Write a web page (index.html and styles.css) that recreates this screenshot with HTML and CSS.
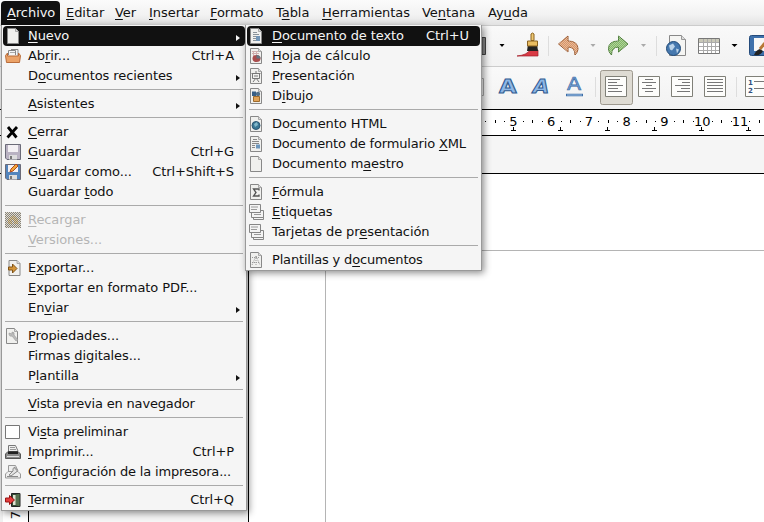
FILE: index.html
```html
<!DOCTYPE html>
<html lang="es">
<head>
<meta charset="utf-8">
<title>Writer</title>
<link rel="stylesheet" href="styles.css">
</head>
<body>
<svg class="defs" width="0" height="0">
  <symbol id="page" viewBox="0 0 16 16"><path d="M2.5.5h8l3 3v12h-11z" fill="#f0f0ee" stroke="#888"/><path d="M10.500 .5v3h3" fill="#ddd" stroke="#999" stroke-width=".8"/></symbol>
  <symbol id="cards" viewBox="0 0 16 16"><g fill="#f3f3f3" stroke="#858585"><path d="M5.500 11.500h10v4h-10z"/><path d="M3.500 6.500h12v7h-12z"/><path d="M1.500 .5h11v8h-11z"/></g><path d="M3 3h7M3 5.500h6M6 10.500h7" stroke="#999"/></symbol>
  <symbol id="floppy" viewBox="0 0 16 16"><path d="M.5.5h15v15H2l-1.500-1.500z" fill="currentColor" stroke="#6b6b78"/><path d="M3 1h10v7H3z" fill="#f4f1f4"/><path d="M4 11h8v4.500H4z" fill="#ddd"/><path d="M5 12h2v3H5z" fill="#777"/></symbol>
</svg>
<nav class="menubar">
  <span class="open"><u>A</u>rchivo</span><span><u>E</u>ditar</span><span><u>V</u>er</span><span><u>I</u>nsertar</span><span><u>F</u>ormato</span><span>T<u>a</u>bla</span><span><u>H</u>erramientas</span><span>Ve<u>n</u>tana</span><span>Ay<u>u</u>da</span>
</nav>
<div class="toolbar standard">
  <svg width="282" height="40">
    <defs><pattern id="dither" width="2" height="2" patternUnits="userSpaceOnUse"><path d="M0 0h1v1H0zM1 1h1v1H1z" fill="#fff" opacity=".35"/></pattern></defs>
    <path d="M0 11.500h3.500v17H0z" fill="#888" stroke="#444"/>
    <path d="M17.500 18h5l-2.500 3z"/>
    <path d="M35 30q10-1 13-6l8 0v6z" fill="#d83a45" stroke="#a51e28" stroke-width=".7"/><path d="M46 18h9l1 7H45z" fill="#222"/><path d="M45.500 15h10v5h-10z" fill="#e9bd62" stroke="#8b6321"/><path d="M49 14.500V8q1.500-2 3 0v6.500z" fill="#edc873" stroke="#8b6321"/>
    <path d="M66.500 10v20" stroke="#ddd"/>
    <path d="M76.500 18L86 10v5q10 0 10 8 0 3-3 6 0-8-7-8v5z" fill="#d99566" stroke="#9a5a31"/><path d="M76 18L86 10v5q10 0 10 8 0 3-3 6 0-8-7-8v5z" fill="url(#dither)"/>
    <path d="M108.500 18h5l-2.500 3z" fill="#aaa"/>
    <path d="M146 18L136.500 10v5q-10 0-10 8 0 3 3 6 0-8 7-8v5z" fill="#84b866" stroke="#4c7b38"/><path d="M146 18L136.500 10v5q-10 0-10 8 0 3 3 6 0-8 7-8v5z" fill="url(#dither)"/>
    <path d="M159 18h5l-2.500 3z" fill="#aaa"/><path d="M174.500 10v20" stroke="#ddd"/>
    <path d="M187.500 9.500h12l4 4v16h-16z" fill="#f5f5f3" stroke="#888"/><path d="M199.500 9.500v4h4" fill="#ddd" stroke="#999"/><circle cx="191.500" cy="22.500" r="7" fill="#4678ae" stroke="#204a78"/><path d="M187 19.500l4-2 2 3-3 4-2-1zM194 22.500l3 1-2 4z" fill="#bbd3e9"/>
    <path d="M216.500 12.500h21v15h-21z" fill="#fff" stroke="#777"/><path d="M217 13h20v3h-20z" fill="#c9c8b8"/><path d="M217 16.500h20M217 20.500h20M217 24.500h20M221.500 13v14M225.500 13v14M229.500 13v14M233.500 13v14" stroke="#aaa"/>
    <path d="M249.500 18h6l-3 3z"/>
    <rect x="267.500" y="9.500" width="24" height="20" rx="2" fill="#3e70ab" stroke="#244b7b"/><path d="M272 12h12v13h-12z" fill="#f7f7f7"/><path d="M272 29q2-5 6-6l3 2q-2 5-9 4" fill="#222"/><path d="M278 23l5-6" stroke="#b87836" stroke-width="3"/>
  </svg>
</div>
<div class="toolbar format">
  <svg width="282" height="41">
    <path d="M0 11.500h1.500v17H0" stroke="#aaa" fill="none"/>
    <g class="glyphs"><text transform="translate(17 26) scale(1.2 1)">A</text><text transform="translate(51 26) scale(1.1 1)" class="slant">A</text><text transform="translate(85 23) scale(1.15 1)" class="plain">A</text></g>
    <path d="M84 28h17" stroke="#3d6da6" stroke-width="2.500"/><path d="M85 28h15" stroke="#a4c6ea"/>
    <path d="M113.500 10v20" stroke="#ddd"/>
    <rect x="118.500" y="3.500" width="32" height="34" rx="2" fill="#dedbd3" stroke="#9d988e"/>
    <path d="M123.500 9.500h21v20h-21zM156.500 9.500h21v20h-21zM189.500 9.500h21v20h-21zM222.500 9.500h21v20h-21zM263.500 9.500h24v20h-24z" fill="#fdfdfb" stroke="#808078"/>
    <path d="M126 12.500h12M126 15.500h9M126 18.500h15M126 21.500h10M126 24.500h14M163 12.500h8M160 15.500h14M164 18.500h6M160 21.500h14M163 24.500h8M196 12.500h12M200 15.500h8M193 18.500h15M199 21.500h9M195 24.500h13M225 12.500h16M225 15.500h16M225 18.500h16M225 21.500h16M225 24.500h16M272 14.500h10M272 21.500h10" stroke="#777"/><path d="M254.500 10v20" stroke="#ddd"/>
    <text x="266" y="18" class="tiny">1</text><text x="266" y="26" class="tiny">2</text>
  </svg>
</div>
<div class="ruler"><svg width="282" height="25" class="rule" id="rule"></svg></div>
<div class="gap"></div>
<main class="workspace"><aside><span>7</span></aside><div class="edge"></div><section class="sheet"></section></main>

<div class="menu archivo">
  <div class="row on sub"><svg class="ic"><use href="#page"/></svg><span><u>N</u>uevo</span></div>
  <div class="row"><svg class="ic" viewBox="0 0 16 16"><path d="M3.500 7V2.500h7V7M6 1.500h7V8" fill="#f5f5f5" stroke="#888"/><path d="M.5 7.500L2.500 5v3h11V5l2 2.500-1 7h-13z" fill="#eba267" stroke="#b96d3b"/><path d="M5 4.500h5" stroke="#aaa"/></svg><span>Ab<u>r</u>ir...</span><kbd>Ctrl+A</kbd></div>
  <div class="row sub"><i class="ic"></i><span>D<u>o</u>cumentos recientes</span></div>
  <hr>
  <div class="row sub"><i class="ic"></i><span><u>A</u>sistentes</span></div>
  <hr>
  <div class="row"><svg class="ic" viewBox="0 0 16 16"><path d="M3 3l8.500 10.500M12 3L2.500 13.500" stroke="#000" stroke-width="2.800"/></svg><span><u>C</u>errar</span></div>
  <div class="row"><svg class="ic gray"><use href="#floppy"/></svg><span><u>G</u>uardar</span><kbd>Ctrl+G</kbd></div>
  <div class="row"><svg class="ic blue" viewBox="0 0 16 16"><use href="#floppy"/><path d="M5 8l1-3 5-5 2 2-5 5z" fill="#f0a63a" stroke="#b44b1d"/></svg><span>G<u>u</u>ardar como...</span><kbd>Ctrl+Shift+S</kbd></div>
  <div class="row"><i class="ic"></i><span>Guardar <u>t</u>odo</span></div>
  <hr>
  <div class="row off"><svg class="ic" viewBox="0 0 16 16"><defs><pattern id="check" width="2" height="2" patternUnits="userSpaceOnUse"><path d="M0 0h1v1H0zM1 1h1v1H1z" fill="#85827a"/></pattern></defs><path d="M0 0h16v16H0z" fill="#e2ddd2"/><path d="M3 12V7l5-4 5 4v5H9V8H7v4z" fill="#e8c888"/><path d="M0 0h16v16H0z" fill="url(#check)"/></svg><span><u>R</u>ecargar</span></div>
  <div class="row off"><i class="ic"></i><span><u>V</u>ersiones...</span></div>
  <hr>
  <div class="row"><svg class="ic" viewBox="0 0 16 16"><use href="#page" x="1.500" width="16" height="16"/><path d="M3.500 7h4V4l4.500 4.500-4.500 4.500v-3h-4z" fill="#d49539" stroke="#805215"/></svg><span>E<u>x</u>portar...</span></div>
  <div class="row"><i class="ic"></i><span><u>E</u>xportar en formato PDF...</span></div>
  <div class="row sub"><i class="ic"></i><span>En<u>v</u>iar</span></div>
  <hr>
  <div class="row"><svg class="ic" viewBox="0 0 16 16"><use href="#page" x="-1" width="16" height="16"/><path d="M4 5q0 4 3 3l4 5 2-1-4-5q1-3-2-3v2z" fill="#bbb" stroke="#999" stroke-width=".6"/></svg><span><u>P</u>ropiedades...</span></div>
  <div class="row"><i class="ic"></i><span>Firmas <u>d</u>igitales...</span></div>
  <div class="row sub"><i class="ic"></i><span>P<u>l</u>antilla</span></div>
  <hr>
  <div class="row tight"><i class="ic"></i><span><u>V</u>ista previa en navegador</span></div>
  <hr>
  <div class="row tight"><svg class="ic" viewBox="0 0 16 16"><path d="M.5 1.500h14v13H.5z" fill="#fff" stroke="#777"/></svg><span>Vi<u>s</u>ta preliminar</span></div>
  <div class="row"><svg class="ic" viewBox="0 0 16 16"><path d="M3.500 8V1.500h7L13 7" fill="#eee" stroke="#777"/><path d="M5 3.500h5M5 5.500h6" stroke="#999"/><path d="M.5 10L3 7.500h10l2.500 2.500v4.500H.5z" fill="#8a8a8a" stroke="#555"/><path d="M3 7.500h10v2.500H3z" fill="#222"/><path d="M2 12.500h12" stroke="#ddd"/></svg><span><u>I</u>mprimir...</span><kbd>Ctrl+P</kbd></div>
  <div class="row tight"><svg class="ic" viewBox="0 0 16 16"><path d="M3.500 8V1.500h7L13 7M.5 10L3 7.500h10l2.500 2.500v4H.5z" fill="#eee" stroke="#999"/><path d="M4 11l4-4q-1-3 2-4v2h2q1 3-2 4l-4 3zM2 12.500h11" fill="#e4e4e4" stroke="#8a8a8a"/></svg><span>Con<u>f</u>iguración de la impresora...</span></div>
  <hr>
  <div class="row"><svg class="ic" viewBox="0 0 16 16"><path d="M6.500 1.500h8.500v13H6.500z" fill="#344d36" stroke="#222"/><path d="M8 3h3v10H8z" fill="#dfe3d2"/><path d="M10.500 3l4-1.500v13l-4-1.500z" fill="#56704f"/><path d="M.5 6h4V3.500L9.500 8l-5 4.500V10h-4z" fill="#e53d3d" stroke="#971515"/></svg><span><u>T</u>erminar</span><kbd>Ctrl+Q</kbd></div>
</div>

<div class="menu nuevo">
  <div class="row on"><svg class="ic" viewBox="0 0 16 16"><use href="#page"/><path d="M5 4.500h4M5 6.500h6M5 8.500h3M5 10.500h3M5 12.500h3" stroke="#8a9299"/><path d="M8 8h4v5H8z" fill="#7295b6"/></svg><span><u>D</u>ocumento de texto</span><kbd>Ctrl+U</kbd></div>
  <div class="row"><svg class="ic" viewBox="0 0 16 16"><use href="#page"/><path d="M4 3.500h6M4 5.500h7M5.500 3v5M8.500 3v5" stroke="#d0b0b0"/><ellipse cx="8.500" cy="10.500" rx="4" ry="3.500" fill="#a94d4d"/><path d="M8.500 10.500V7q4 0 4 3.500z" fill="#637582"/></svg><span><u>H</u>oja de cálculo</span></div>
  <div class="row"><svg class="ic" viewBox="0 0 16 16"><use href="#page"/><path d="M4.500 5.500h7v5h-7zM3.500 5.500h9M8 3v3M8 10l-3 4M8 10l3 4M6 8h4" fill="none" stroke="#777"/></svg><span><u>P</u>resentación</span></div>
  <div class="row"><svg class="ic" viewBox="0 0 16 16"><use href="#page"/><path d="M4 3.500h4v4.500H4z" fill="#385f86"/><circle cx="10" cy="6" r="2.200" fill="#526f88"/><path d="M5.500 8.500h6v5h-6z" fill="#e2a357" stroke="#9d6b2d"/></svg><span>D<u>i</u>bujo</span></div>
  <hr>
  <div class="row"><svg class="ic" viewBox="0 0 16 16"><use href="#page"/><circle cx="8" cy="9.500" r="4" fill="#397795" stroke="#2c5572"/><path d="M6 8l3-2 1 3-3 2z" fill="#84b8ca"/></svg><span>Do<u>c</u>umento HTML</span></div>
  <div class="row tight"><svg class="ic" viewBox="0 0 16 16"><use href="#page"/><path d="M5 3.500h4M4 5.500h7M4 7.500h7M4 9.500h3M4 11.500h3" stroke="#888"/><path d="M8 8.500h4v4H8z" fill="#6d97bd"/></svg><span>Documento de formulario <u>X</u>ML</span></div>
  <div class="row"><svg class="ic"><use href="#page"/></svg><span>Documento m<u>a</u>estro</span></div>
  <hr>
  <div class="row"><svg class="ic" viewBox="0 0 16 16"><use href="#page"/><path d="M11 6.500V5H5.500L8 8.500l-2.500 3.500H11v-1.500" fill="none" stroke="#555" stroke-width="1.300"/></svg><span><u>F</u>órmula</span></div>
  <div class="row"><svg class="ic"><use href="#cards"/></svg><span><u>E</u>tiquetas</span></div>
  <div class="row"><svg class="ic"><use href="#cards"/></svg><span>Tarjetas de pr<u>e</u>sentación</span></div>
  <hr>
  <div class="row tight"><svg class="ic" viewBox="0 0 16 16"><use href="#page"/><path d="M4 13l4-9 4 9M4 5.500h8M4 10.500h8M8 4v10" fill="none" stroke="#999" stroke-dasharray="1 1"/></svg><span>Plantillas y d<u>o</u>cumentos</span></div>
</div>
<script src="ruler.js"></script>
</body>
</html>
```
FILE: styles.css
```css
* { box-sizing: border-box; }
body { margin: 0; width: 764px; height: 522px; overflow: hidden; position: relative; background: #fff; color: #111; font: 13px/20px "DejaVu Sans", sans-serif; display: flex; flex-direction: column; }
u { text-decoration: underline; text-decoration-thickness: 1px; text-underline-offset: 2px; text-decoration-skip-ink: none; }
.defs { position: absolute; }
.menubar { height: 25px; flex: none; display: grid; grid-template-columns: 59px 49px 34px 61px 66px 46px 100px 66px 60px; padding-left: 1px; line-height: 26px; background: linear-gradient(#fbfbfb, #f2f2f2 60%, #e2e2e2); white-space: nowrap; letter-spacing: -.05px; }
.menubar span { padding-left: 6px; }
.menubar .open { background: #111; color: #f5f5f5; border-radius: 4px 4px 0 0; margin-top: 1px; line-height: 24px; }
.toolbar { height: 41px; flex: none; padding-left: 482px; background: linear-gradient(#f9f9f9, #f2f2f2); border-top: 1px solid #ccc; }
.toolbar svg { display: block; }
.format { height: 44px; border-bottom: 1px solid #000; }
.glyphs { font: bold 19px "DejaVu Sans", sans-serif; fill: #8db7e6; stroke: #315b91; stroke-width: 1px; }
.slant { font-size: 19px; font-style: italic; }
.plain { font-size: 18px; font-weight: normal; fill: #6f9fd6; stroke: #41699f; stroke-width: .6px; }
.tiny { font: bold 7px "DejaVu Sans", sans-serif; fill: #2f4f80; }
.ruler { height: 26px; flex: none; padding-left: 482px; background: #fff; border-bottom: 1px solid #000; }
.rule { display: block; }
.gap { height: 38px; flex: none; background: #f5f5f5; border-bottom: 1px solid #000; }
.workspace { flex: 1; display: flex; }
.workspace aside { width: 29px; border-left: 3px solid #f0f0f0; border-right: 1px solid #000; display: flex; align-items: flex-end; justify-content: center; padding-bottom: 3px; }
.workspace aside span { writing-mode: vertical-rl; transform: rotate(180deg); }
.edge { width: 220px; background: #f5f5f5; border-right: 1px solid #000; }
.sheet { flex: 1; margin: 76px 0 0 76px; border: solid #b4b4b4; border-width: 1px 0 0 1px; }
.menu { position: absolute; top: 25px; padding: 1px 1px 0; background: #f5f5f5; border: solid #999; border-width: 0 1px 1px; box-shadow: 2px 2px 7px rgba(0,0,0,.45); letter-spacing: -.08px; }
.archivo { left: 1px; width: 246px; height: 486px; }
.nuevo { left: 245px; width: 237px; height: 246px; }
.row { height: 20px; display: flex; align-items: center; white-space: nowrap; padding: 0 11px 0 2px; }
.ic { width: 16px; height: 16px; flex: none; margin-right: 7px; }
.row kbd { font: inherit; margin-left: auto; }
.tight { letter-spacing: -.17px; }
.on { background: #111; color: #f5f5f5; border-radius: 4px; }
.off { color: #b5b5b5; }
.sub::after { content: ""; margin: 3px -6px 0 auto; border: solid transparent; border-width: 3px 0 3px 4px; border-left-color: currentColor; }
.menu hr { height: 1px; margin: 3px 2px 4px; border: 0; background: #aaa; }
.nuevo .row { padding-left: 1px; }
.nuevo .ic { margin-right: 8px; }
.gray { color: #b9b2c2; }
.blue { color: #5385bd; }
```
FILE: ruler.js
```js
const rule = document.getElementById('rule');
const unit = 37.75;
const start = 31.5;
let out = '';
for (let n = 4; n <= 11; n++) {
  const x = start + (n - 5) * unit;
  if (n > 4) out += `<text x="${x}" y="16" text-anchor="middle">${n}</text>`;
  for (let q = 1; q < 4; q++) {
    const h = q === 2 ? 3 : 1;
    out += `<rect x="${Math.round(x + q * unit / 4)}" y="${11 - (h >> 1)}" width="1" height="${h}"/>`;
  }
}
for (let x = 31; x < 282; x += 47) {
  out += `<path d="M${x - 2} 20.500h5M${x + .5} 17v3" stroke="#000"/>`;
}
rule.innerHTML = out;
```
